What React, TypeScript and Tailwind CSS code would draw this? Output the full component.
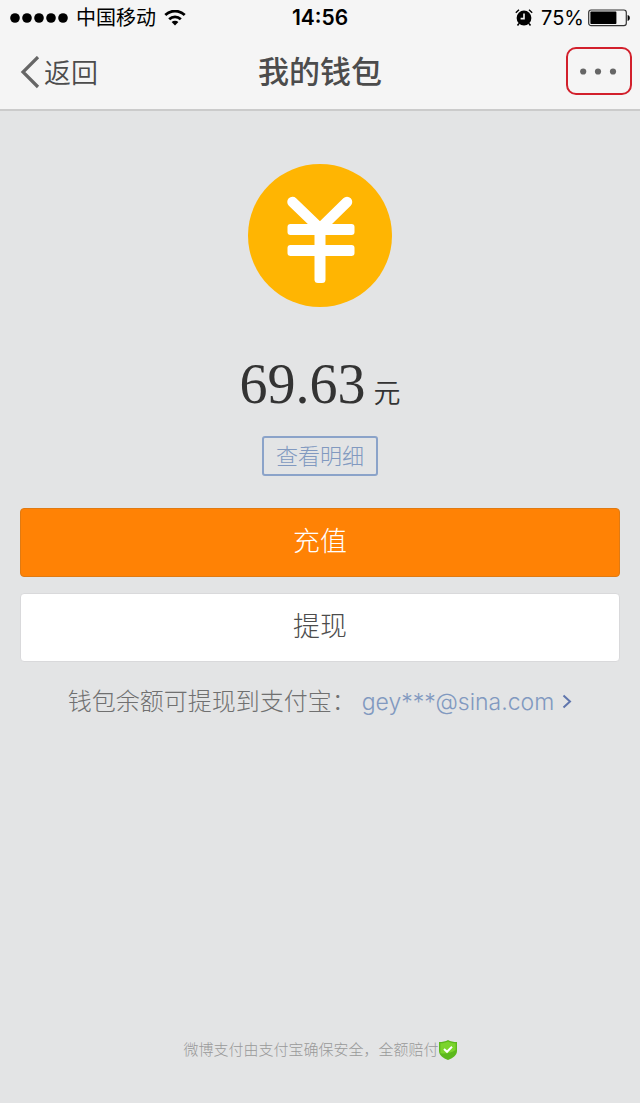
function StatusBar() {
  return (
    <div className="relative flex h-9 items-center justify-between px-2.5 text-[20px] text-black">
      <div className="flex items-center gap-2">
        <svg width="58" height="10" viewBox="0 0 58 10" fill="currentColor" aria-hidden="true">
          <circle cx="5" cy="5" r="4.8" />
          <circle cx="17" cy="5" r="4.8" />
          <circle cx="29" cy="5" r="4.8" />
          <circle cx="41" cy="5" r="4.8" />
          <circle cx="53" cy="5" r="4.8" />
        </svg>
        <span>中国移动</span>
        <svg width="22" height="16" viewBox="0 0 22 16" fill="none" stroke="currentColor" strokeWidth="2.8" aria-hidden="true">
          <path d="M1.3 5a14 14 0 0 1 19.4 0" />
          <path d="M5.2 9.200a8.4 8.4 0 0 1 11.6 0" />
          <path d="M11 15.400 7.600 12a4.9 4.9 0 0 1 6.8 0Z" fill="currentColor" stroke="none" />
        </svg>
      </div>
      <span className="absolute left-1/2 -translate-x-1/2 text-[21px] font-semibold">14:56</span>
      <div className="flex items-center gap-1">
        <svg className="mr-1" width="18" height="18" viewBox="0 0 18 18" aria-hidden="true">
          <circle cx="9" cy="9" r="7.4" fill="#000" />
          <path d="M9 4.6v5H5.6" fill="none" stroke="#f5f5f5" strokeWidth="1.6" />
          <path d="M.8 3.8 4 .8M17.2 3.8 14 .8" stroke="#000" strokeWidth="1.4" />
          <path d="m4 14.6-1.5 1.8M14 14.6l1.5 1.8" stroke="#000" strokeWidth="1.6" />
        </svg>
        <span>75%</span>
        <svg width="42" height="18" viewBox="0 0 42 18" aria-hidden="true">
          <rect x="0.7" y="1" width="37.6" height="15.6" rx="2.4" fill="none" stroke="#333" strokeWidth="1.2" />
          <rect x="2.4" y="2.6" width="26" height="12.4" rx="0.8" fill="#000" />
          <path d="M39.6 6v6c1.6-.4 2.2-1.6 2.2-3s-.6-2.6-2.2-3Z" fill="#000" />
        </svg>
      </div>
    </div>
  );
}

function NavBar() {
  return (
    <nav className="relative flex h-[73px] items-center justify-between pr-2 pl-5 text-[#4c4c4c]">
      <button type="button" className="flex items-center gap-1 font-['Noto_Sans_CJK_SC',sans-serif] text-[27px] font-[350]">
        <svg width="20" height="34" viewBox="0 0 20 34" fill="none" stroke="#666" strokeWidth="3.2" aria-hidden="true">
          <path d="M18 1 3 16l15 15" />
        </svg>
        返回
      </button>
      <h1 className="absolute left-1/2 -translate-x-1/2 text-[31px] font-medium whitespace-nowrap">我的钱包</h1>
      <button
        type="button"
        aria-label="更多"
        className="mb-1 flex h-12 w-[66px] items-center justify-center rounded-[10px] border-2 border-[#d2202c]"
      >
        <svg width="38" height="8" viewBox="0 0 38 8" fill="#666" aria-hidden="true">
          <circle cx="3.2" cy="4.500" r="3.1" />
          <circle cx="18" cy="4.500" r="3.1" />
          <circle cx="33" cy="4.500" r="3.1" />
        </svg>
      </button>
    </nav>
  );
}

function YuanCoin() {
  return (
    <svg className="mx-auto" width="144" height="144" viewBox="0 0 144 144" aria-hidden="true">
      <ellipse cx="72" cy="71.5" rx="72" ry="71.5" fill="#ffb502" />
      <path d="m44.5 38 27.5 26.500 27-26.500" fill="none" stroke="#fff" strokeWidth="10.5" strokeLinecap="round" />
      <rect x="39.5" y="60" width="67" height="11" rx="3" fill="#fff" />
      <rect x="39.5" y="81" width="67" height="11" rx="3" fill="#fff" />
      <rect x="66.5" y="64" width="11" height="55" rx="3.5" fill="#fff" />
    </svg>
  );
}

function ShieldIcon() {
  return (
    <svg width="18" height="20" viewBox="0 0 18 20" aria-hidden="true">
      <path d="M9 0c2.4 1.6 5.6 2 9 2v9c0 4.6-4.4 7-9 9-4.6-2-9-4.4-9-9V2c3.4 0 6.6-.4 9-2Z" fill="#5cb81c" />
      <path d="M9 1.4c2.3 1.3 4.8 1.7 7.6 1.8V10c-4 3-10 4-15.2 3.2V3.2C4.2 3.1 6.7 2.7 9 1.4Z" fill="#7bd42c" />
      <path d="m5 9 3 2.800 5-5" fill="none" stroke="#fff" strokeWidth="2" />
    </svg>
  );
}

export default function App() {
  return (
    <div className="flex min-h-screen flex-col bg-[#e3e4e5] font-['Inter','Noto_Sans_CJK_SC',sans-serif]">
      <header className="border-b-2 border-[#cbcbcb] bg-[#f5f5f5]">
        <StatusBar />
        <NavBar />
      </header>

      <main className="flex flex-1 flex-col px-5 pt-[53px] pb-[43px]">
        <YuanCoin />

        <p className="mt-11 flex items-baseline justify-center gap-2 leading-[64px] text-[#333]">
          <span className="font-['Liberation_Serif',serif] text-[56px]">69.63</span>
          <span className="text-[27px] font-[350]">元</span>
        </p>

        <button
          type="button"
          className="mx-auto mt-2.5 h-10 rounded-[3px] border-2 border-[#8ba3c9] px-3 text-[22px] leading-9 font-light text-[#8199c0]"
        >
          查看明细
        </button>

        <button
          type="button"
          className="mt-8 h-[69px] rounded border border-[#e07a12] bg-[#ff8205] text-[27px] font-light text-white"
        >
          充值
        </button>
        <button
          type="button"
          className="mt-4 h-[69px] rounded border border-[#d9d9db] bg-white text-[27px] font-light text-[#4c4c4c]"
        >
          提现
        </button>

        <p className="mt-6 flex items-center justify-center text-[24px] leading-8 font-light text-[#707070]">
          钱包余额可提现到支付宝：
          <a href="#account" className="ml-1.5 flex items-center gap-2 text-[23px] text-[#8199c0]">
            gey***@sina.com
            <svg width="10" height="16" viewBox="0 0 10 16" fill="none" stroke="#6076ad" strokeWidth="2" aria-hidden="true">
              <path d="m1.5 1.500 6.500 6-6.500 6" />
            </svg>
          </a>
        </p>

        <footer className="mt-auto flex items-center justify-center text-[15px] leading-5 font-light text-[#999]">
          微博支付由支付宝确保安全，全额赔付
          <ShieldIcon />
        </footer>
      </main>
    </div>
  );
}
